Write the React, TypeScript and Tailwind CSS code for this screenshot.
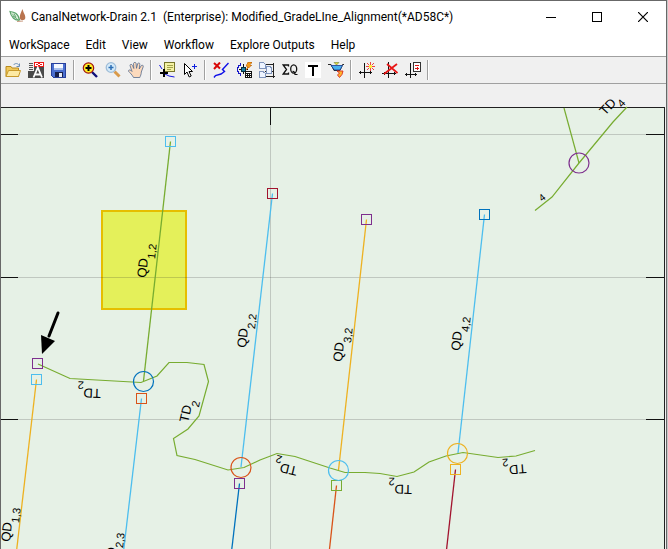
import type { ReactNode } from "react";

const MENUS = ["WorkSpace", "Edit", "View", "Workflow", "Explore Outputs", "Help"];

function Logo() {
  return (
    <svg width="18" height="18" viewBox="0 0 18 18" aria-hidden="true">
      <path d="M1 3.500C5 4 9 5 10.500 12C6 13 2 9 1 3.500Z" fill="#eef7ec" stroke="#5aa469" strokeWidth="1.200" />
      <path d="M3 5.500L9.500 12.500M5 5.500L7 9M3.500 8L7 10" fill="none" stroke="#5aa469" strokeWidth="0.900" />
      <path d="M13.500 1C11.500 5.500 10.500 7.500 11 10.500C11.300 12.500 15.500 12.800 16.200 10.500C17 7.500 14.500 5.500 13.500 1Z" fill="#b9744f" />
      <path d="M8 13.500L14 13" stroke="#c99a80" strokeWidth="1.200" />
    </svg>
  );
}

function Icon({ children, crisp = true }: { children: ReactNode; crisp?: boolean }) {
  return (
    <svg width="16" height="16" viewBox="0 0 16 16" fill="none" shapeRendering={crisp ? "crispEdges" : "auto"} aria-hidden="true">
      {children}
    </svg>
  );
}

const TOOL_GROUPS: { label: string; icon: ReactNode }[][] = [
  [
    {
      label: "Open",
      icon: (
        <Icon crisp={false}>
          <path d="M8.500 3C10 1 13 1 14 3.500M14.500 1.500V4.500H11.500" stroke="#6b8fb5" />
          <path d="M1 4.500H6L7 6H13.500V14.500H1Z" fill="#f0c85a" stroke="#b98a1c" />
          <path d="M3.500 8.500H15.500L13.500 14.500H1Z" fill="#fdeaa4" stroke="#c89a2c" />
        </Icon>
      ),
    },
    {
      label: "Export drawing",
      icon: (
        <Icon>
          <rect width="16" height="16" fill="#4a4a4a" />
          <path d="M0 0H6V9H0Z" fill="#eee" />
          <path d="M1 1.500H5M1 3.500H5M1 5.500H5M1 7.500H5" stroke="#555" />
          <rect x="6" width="10" height="5" fill="#f01818" />
          <path d="M9.500 1.500H7.500V3.500H9.500M12 1.500H14.500V3.500H12M9.500 2.500H12" stroke="#fff" />
          <path d="M5.500 15.500L9.800 5.500L14 15.500M7 12.500H12.500" stroke="#fff" strokeWidth="1.800" shapeRendering="auto" />
        </Icon>
      ),
    },
    {
      label: "Save",
      icon: (
        <Icon>
          <path d="M.5 1.500H14.500V15.500H2.500L.5 13.500Z" fill="#4a6fd0" stroke="#28409c" />
          <rect x="3" y="2" width="9" height="6" fill="#f4f8ff" />
          <rect x="3" y="6" width="9" height="2" fill="#a9c0ec" />
          <rect x="4" y="10" width="8" height="5" fill="#18204a" />
          <rect x="8" y="11" width="3" height="4" fill="#e8ecf6" />
        </Icon>
      ),
    },
  ],
  [
    {
      label: "Zoom window",
      icon: (
        <Icon crisp={false}>
          <path d="M10 10L15 15" stroke="#10107a" strokeWidth="2.400" />
          <circle cx="6.500" cy="6" r="5.200" fill="#ffee22" stroke="#a01414" strokeWidth="1.200" />
          <path d="M6.500 3V9M3.500 6H9.500" stroke="#000" strokeWidth="2" />
        </Icon>
      ),
    },
    {
      label: "Zoom in",
      icon: (
        <Icon crisp={false}>
          <path d="M9.500 9.500L14.500 14.500" stroke="#d99a4a" strokeWidth="3" />
          <circle cx="6" cy="5.500" r="4.800" fill="#d5ebfa" stroke="#9fbdd8" strokeWidth="1.300" />
          <path d="M6 3V8M3.500 5.500H8.500" stroke="#2e6fb5" strokeWidth="1.500" />
        </Icon>
      ),
    },
    {
      label: "Pan",
      icon: (
        <Icon crisp={false}>
          <path
            d="M5.500 15.500C4 12.500 2 11 .5 9.200C.3 7.500 2.500 7.500 4 9.500L2 3.500C2 2 4 2 4.500 3.500L5.800 6.500L5.500 1.500C5.800 0 7.900 0 8.100 1.500L8.500 6.300L9.700 1.700C10.300 .3 12 .8 11.800 2.500L11.200 7L13.200 3.700C14 2.600 15.700 3.300 15.200 4.800L13.300 10C13.300 12.500 12.300 14 11.800 15.500Z"
            fill="#fcdabd"
            stroke="#54698c"
            strokeWidth=".8"
          />
        </Icon>
      ),
    },
  ],
  [
    {
      label: "Line information",
      icon: (
        <Icon>
          <rect x="5.500" y=".5" width="10" height="9" fill="#f4f2a4" stroke="#77752a" />
          <path d="M8 3.500H14M8 5.500H14M8 7.500H12" stroke="#a5a34c" />
          <path d="M.5 3L3 7M6 12L10 14L15.500 15" stroke="#1515e0" shapeRendering="auto" />
          <path d="M5 7V15M1 11H9" stroke="#000" strokeWidth="2" />
        </Icon>
      ),
    },
    {
      label: "Select and add",
      icon: (
        <Icon crisp={false}>
          <path d="M2.500 1.500V12.500L5 10L7.200 15L9.200 14L7 9.500H10.500Z" fill="#fff" stroke="#000" />
          <path d="M12.500 1.500V6.500M10 4H15" stroke="#1020e0" shapeRendering="crispEdges" />
        </Icon>
      ),
    },
  ],
  [
    {
      label: "Delete line",
      icon: (
        <Icon crisp={false}>
          <path d="M1 1L7 6.500M7 .5L1 7" stroke="#d80808" strokeWidth="2" />
          <path d="M15.500 1L9.500 7.500L11.500 9.500L8 12L2.500 13.500L1 15.500" stroke="#1010e8" strokeWidth="1.400" />
        </Icon>
      ),
    },
    {
      label: "Quick compute",
      icon: (
        <Icon>
          <path d="M4.500 1V3.500H2.500V5.500H1.500V9.500H2.500V11.500H4.500V13.500" stroke="#1818c8" />
          <path d="M7.500 2V12M3 7.500H12" stroke="#111" />
          <rect x="5.500" y="5.500" width="4" height="4" fill="#1a7da3" stroke="#032d40" />
          <path d="M12 0H16L14 3H16L10 8L12 4H10Z" fill="#f59a18" stroke="#b45d08" strokeWidth=".5" />
          <rect x="9" y="9" width="7" height="7" fill="#111" />
          <path d="M10 10.500H15M10 12.500H11M12 12.500H13M14 12.500H15M10 14.500H11M12 14.500H13M14 14.500H15" stroke="#fff" />
        </Icon>
      ),
    },
    {
      label: "Sheet layout",
      icon: (
        <Icon>
          <path d="M6 2.500H15M14.500 1V16M6 14.500H16M6 9.500H15" stroke="#222" />
          <path d="M.5 .5H4.500L6.500 2.500V6.500H.5Z" fill="#eef4ff" stroke="#8095bd" />
          <path d="M7.500 4.500H11L12.500 6V11.500H7.500Z" fill="#eef4ff" stroke="#8095bd" />
          <path d="M.5 9.500H4L6.500 11.500V15.500H.5Z" fill="#eef4ff" stroke="#8095bd" />
        </Icon>
      ),
    },
    {
      label: "Sum of discharge",
      icon: (
        <Icon crisp={false}>
          <path d="M6.500 4.500V3H1.200L4.500 7.500L1.200 12H6.500V10.500" stroke="#111" strokeWidth="1.300" />
          <ellipse cx="11.700" cy="7" rx="3" ry="4.200" stroke="#111" strokeWidth="1.300" />
          <path d="M10.500 9.500Q12.500 9 13 12.500H15.500" stroke="#111" strokeWidth="1.200" />
        </Icon>
      ),
    },
    {
      label: "Text",
      icon: (
        <Icon>
          <rect width="16" height="16" fill="#fff" />
          <path d="M3 4H13M8 3V14" stroke="#000" strokeWidth="2" />
        </Icon>
      ),
    },
    {
      label: "Canal section",
      icon: (
        <Icon crisp={false}>
          <path d="M0 2.500H3L6 8.500H12L14.500 2.500H16" stroke="#2a2a2a" />
          <path d="M3 3.500H14.500L12 8H6.500Z" fill="#48b0ee" stroke="#15358a" strokeWidth=".8" />
          <path d="M6 .5H11L8.500 3Z" fill="#e8dd39" stroke="#6e7f33" strokeWidth=".6" />
          <path d="M9 9H15L14 12.500L11.500 15.500L9.500 13L11.500 11Z" fill="#ffb62d" stroke="#da2b1e" strokeWidth=".9" />
        </Icon>
      ),
    },
  ],
  [
    {
      label: "New axis",
      icon: (
        <Icon>
          <path d="M5.500 1V16M0 10.500H13M1.500 9V12M11.500 9V12" stroke="#111" />
          <path d="M11.500 0V9M7 4.500H16M8 1L15 8M15 1L8 8" stroke="#ee1717" strokeWidth=".8" shapeRendering="auto" />
          <rect x="10" y="3" width="3" height="3" fill="#ffef3a" />
        </Icon>
      ),
    },
    {
      label: "Delete axis",
      icon: (
        <Icon>
          <path d="M6.500 0V16M0 11.500H14M2.500 10V13M12.500 10V13" stroke="#111" />
          <path d="M2 12L15 2M5 2L15.500 11" stroke="#e81616" strokeWidth="1.800" shapeRendering="auto" />
        </Icon>
      ),
    },
    {
      label: "Axis properties",
      icon: (
        <Icon>
          <path d="M5.500 1V16M0 12.500H12M1.500 11V14M10.500 11V14" stroke="#111" />
          <rect x="8.500" y=".5" width="7" height="9" fill="#fff" stroke="#333" />
          <path d="M10 3.500H14M10 6.500H14M12 5V8" stroke="#e01616" />
        </Icon>
      ),
    },
  ],
];

const COLOR = {
  blue: "#0072bd",
  orange: "#d95319",
  yellow: "#edb120",
  purple: "#7e2f8e",
  green: "#77ac30",
  sky: "#4dbeee",
  red: "#a2142f",
};

const DRAINS = [
  { from: [170.5, 141.5], to: [143.5, 381], color: COLOR.green },
  { from: [272.5, 193.5], to: [241, 467], color: COLOR.sky },
  { from: [366.5, 219.5], to: [338.5, 470], color: COLOR.yellow },
  { from: [484.5, 214.5], to: [458, 453], color: COLOR.sky },
  { from: [36.5, 379.5], to: [12, 590], color: COLOR.yellow },
  { from: [141.5, 398.5], to: [119, 590], color: COLOR.sky },
  { from: [239.5, 483.5], to: [227, 590], color: COLOR.blue },
  { from: [336.5, 485.5], to: [325, 590], color: COLOR.orange },
  { from: [455.5, 469.5], to: [442, 590], color: COLOR.red },
];

const SQUARES = [
  { x: 170.5, y: 141.5, color: COLOR.sky },
  { x: 272.5, y: 193.5, color: COLOR.red },
  { x: 366.5, y: 219.5, color: COLOR.purple },
  { x: 484.5, y: 214.5, color: COLOR.blue },
  { x: 37.5, y: 363.5, color: COLOR.purple },
  { x: 36.5, y: 379.5, color: COLOR.sky },
  { x: 141.5, y: 398.5, color: COLOR.orange },
  { x: 239.5, y: 483.5, color: COLOR.purple },
  { x: 336.5, y: 485.5, color: COLOR.green },
  { x: 455.5, y: 469.5, color: COLOR.yellow },
];

const JUNCTIONS = [
  { x: 143.5, y: 381.5, color: COLOR.blue },
  { x: 241, y: 467.5, color: COLOR.orange },
  { x: 338.5, y: 470.5, color: COLOR.sky },
  { x: 457.5, y: 453.5, color: COLOR.yellow },
  { x: 579, y: 163, color: COLOR.purple },
];

const LABELS = [
  { x: 146, y: 278, angle: -84, main: "QD", sub: "1,2" },
  { x: 246, y: 348, angle: -84, main: "QD", sub: "2,2" },
  { x: 342, y: 362, angle: -84, main: "QD", sub: "3,2" },
  { x: 460, y: 351, angle: -84, main: "QD", sub: "4,2" },
  { x: 10, y: 542, angle: -84, main: "QD", sub: "1,3" },
  { x: 114, y: 567, angle: -84, main: "QD", sub: "2,3" },
  { x: 101, y: 389, angle: 182, main: "TD", sub: "2" },
  { x: 298, y: 467, angle: 193, main: "TD", sub: "2" },
  { x: 412, y: 485, angle: 181, main: "TD", sub: "2" },
  { x: 526, y: 464, angle: 175, main: "TD", sub: "2" },
  { x: 188, y: 423, angle: -77, main: "TD", sub: "2" },
  { x: 605, y: 116, angle: -47, main: "TD", sub: "4" },
];

function Plot() {
  return (
    <svg className="block h-full w-full overflow-visible font-['Liberation_Sans',Arial,sans-serif]" fill="none" aria-label="Drain alignment plan">
      <g transform="translate(-1 -108)">
        <rect x="102" y="211" width="84" height="98" fill="#e4f05a" stroke="#e6be00" strokeWidth="2" />
        <g stroke="#262626" strokeOpacity="0.2">
          <line x1="0" x2="100%" y1="134.5" y2="134.5" />
          <line x1="0" x2="100%" y1="277.5" y2="277.5" />
          <line x1="0" x2="100%" y1="419.5" y2="419.5" />
          <line x1="270.5" x2="270.5" y1="108" y2="590" />
        </g>
        <path d="M1 134.500H18M1 277.500H18M1 419.500H18M270.500 108V125" stroke="#111" />
        <svg x="100%" className="overflow-visible">
          <path d="M-17 134.500H1M-17 277.500H1M-17 419.500H1" stroke="#111" />
        </svg>

        <g stroke={COLOR.green} strokeWidth="1.200">
          <polyline points="38,364 70,378.5 141,382.5 157,376 169,362.5 187,362.5 204,364.5 208.5,381.5 199,416 188,429 173.5,438.5 177,455.5 195,459.5 228,470 244,467.5 260,460 277,453.5 295,456.5 330,468 345,472.5 365,472.5 380,473.5 397,476.5 414,472 429,462 446,456 463,452.5 498,457.5 516,456 535,450.5" />
          <polyline points="564,108 579,163" />
          <polyline points="627,107 613,122 579,163 552,197 535,210.5" />
        </g>
        {DRAINS.map((d, i) => (
          <line key={i} x1={d.from[0]} y1={d.from[1]} x2={d.to[0]} y2={d.to[1]} stroke={d.color} strokeWidth="1.300" />
        ))}
        {SQUARES.map((s, i) => (
          <rect key={i} x={s.x - 5} y={s.y - 5} width="10" height="10" stroke={s.color} />
        ))}
        {JUNCTIONS.map((j, i) => (
          <circle key={i} cx={j.x} cy={j.y} r="10" stroke={j.color} strokeWidth="1.200" />
        ))}

        <g fill="#000">
          {LABELS.map((l, i) => (
            <text key={i} transform={`translate(${l.x} ${l.y}) rotate(${l.angle})`} fontSize="13">
              {l.main}
              <tspan dy="7" fontSize="11">{l.sub}</tspan>
            </text>
          ))}
          <text transform="translate(542 202) rotate(-38)" fontSize="10">4</text>
        </g>

        <path d="M58 313L49 336" stroke="#000" strokeWidth="3" strokeLinecap="round" />
        <path d="M42 354L41 335L55 341Z" fill="#000" />
      </g>
    </svg>
  );
}

export default function App() {
  return (
    <div className="flex h-screen overflow-hidden bg-[#c8c8c8] pr-px font-[Roboto,'Noto_Sans',sans-serif] text-xs text-black">
      <div className="flex min-w-0 flex-1 flex-col border-x border-t border-[#686868] bg-white">
        <header className="flex h-8 shrink-0 items-center">
          <div className="flex min-w-0 flex-1 items-center gap-1 pl-2">
            <Logo />
            <h1 className="truncate whitespace-pre">CanalNetwork-Drain 2.1  (Enterprise): Modified_GradeLIne_Alignment(*AD58C*)</h1>
          </div>
          <div className="flex shrink-0">
            <button aria-label="Minimize" className="flex h-8 w-[46px] items-center justify-center">
              <svg width="10" height="10" shapeRendering="crispEdges"><path d="M0 5.500H10" stroke="#000" /></svg>
            </button>
            <button aria-label="Maximize" className="flex h-8 w-[46px] items-center justify-center">
              <svg width="10" height="10" shapeRendering="crispEdges"><rect x=".5" y=".5" width="9" height="9" fill="none" stroke="#000" /></svg>
            </button>
            <button aria-label="Close" className="flex h-8 w-[46px] items-center justify-center">
              <svg width="10" height="10"><path d="M0 0L10 10M10 0L0 10" stroke="#000" strokeWidth="1.200" /></svg>
            </button>
          </div>
        </header>
        <nav className="flex h-[23px] shrink-0 items-center" aria-label="Main menu">
          {MENUS.map((m) => (
            <button key={m} className="px-2 leading-5 whitespace-nowrap">{m}</button>
          ))}
        </nav>
        <div role="toolbar" className="flex h-7 shrink-0 items-center border-y border-[#a0a0a0] bg-[#f0f0f0]">
          {TOOL_GROUPS.map((group, g) => (
            <div key={g} className="flex items-center">
              {group.map((t) => (
                <button key={t.label} aria-label={t.label} title={t.label} className="flex h-6 w-[23px] items-center justify-center">
                  {t.icon}
                </button>
              ))}
              <div className="mx-[3px] h-5 w-0.5 border-r border-l border-r-white border-l-[#a0a0a0]" />
            </div>
          ))}
        </div>
        <div className="flex min-h-0 flex-1 flex-col bg-[#f0f0f0] pt-[23px] pr-px">
          <main className="min-h-0 flex-1 border-t border-r border-[#202020] bg-[#e6f1e6]">
            <Plot />
          </main>
        </div>
      </div>
    </div>
  );
}
